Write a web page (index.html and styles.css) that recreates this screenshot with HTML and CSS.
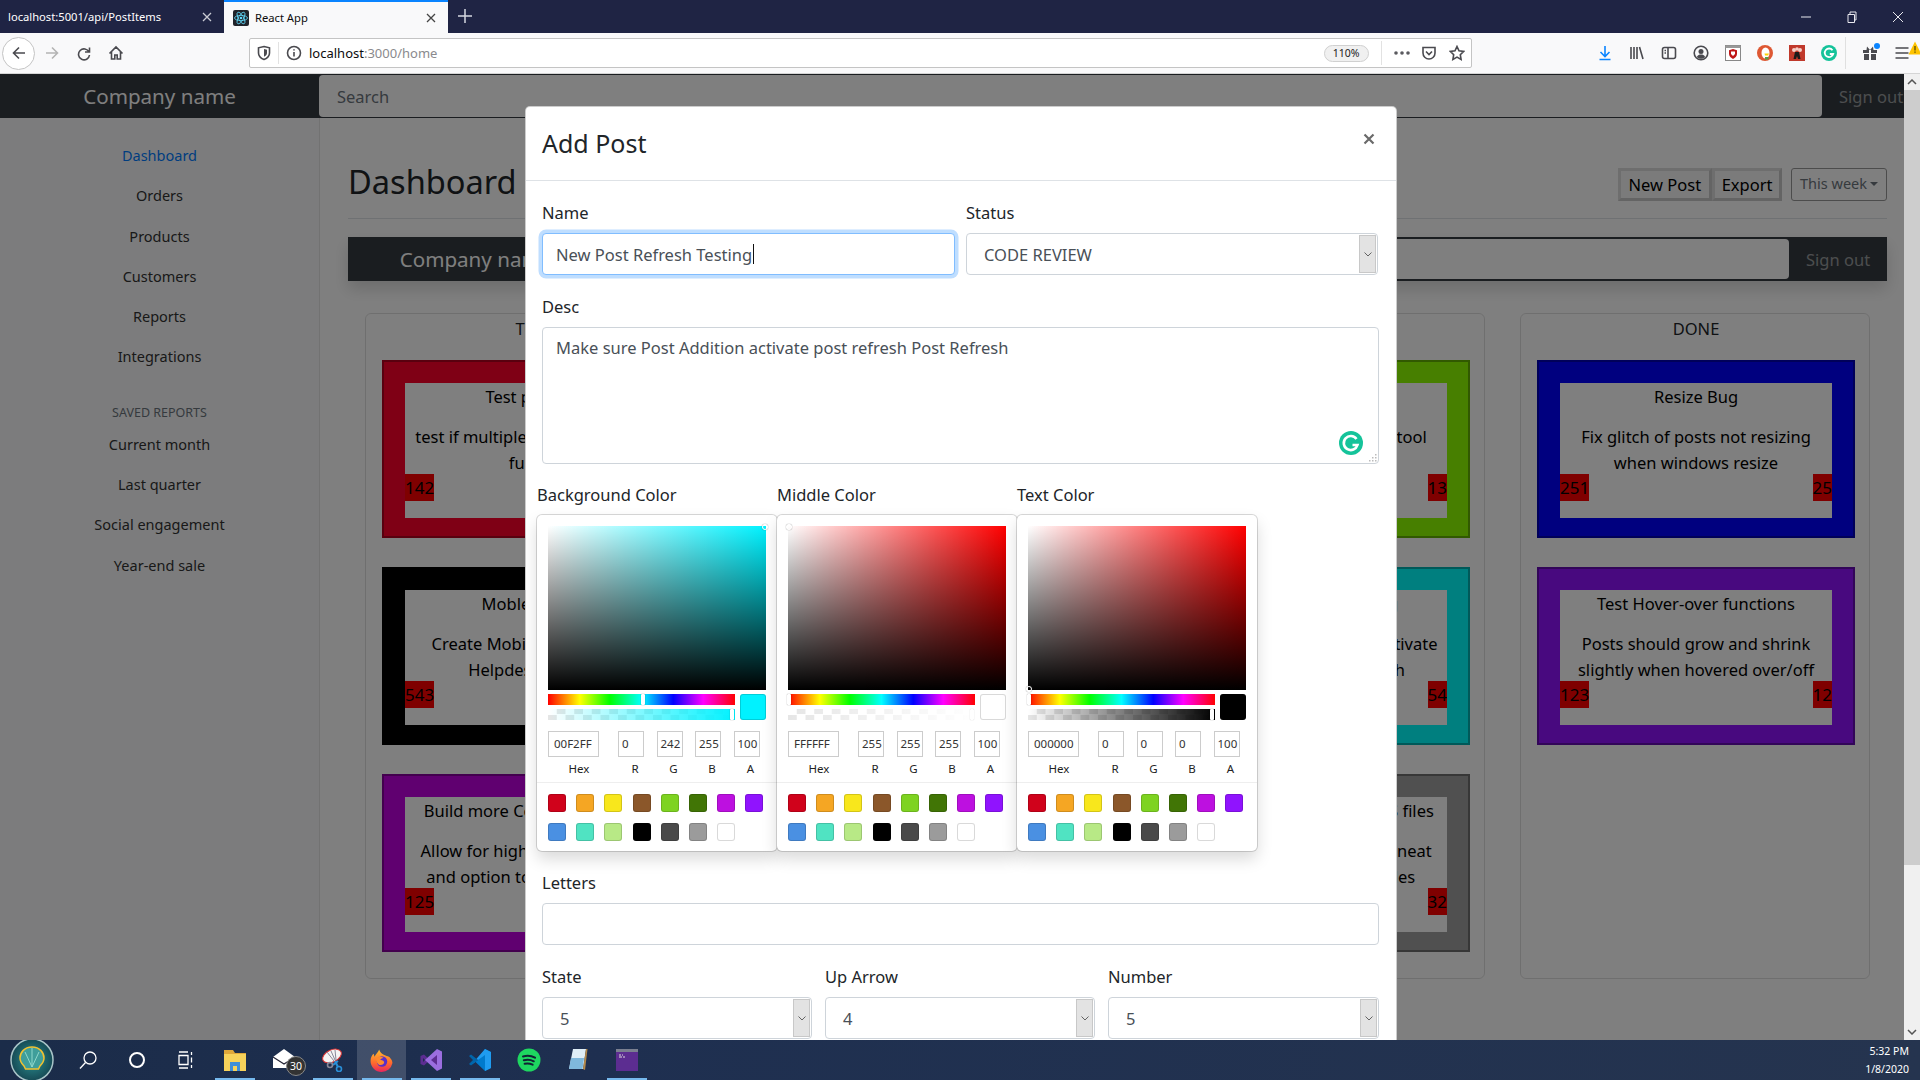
FILE: index.html
```html
<!DOCTYPE html>
<html lang="en">
<head>
<meta charset="utf-8">
<title>React App</title>
<link rel="stylesheet" href="styles.css">
</head>
<body>
<div class="window">

  <div class="tabbar">
    <div class="tab">
      <span class="tab-title">localhost:5001/api/PostItems</span>
      <svg class="tab-x" viewBox="0 0 10 10"><path d="M1 1l8 8M9 1l-8 8"/></svg>
    </div>
    <div class="tab tab-active">
      <svg class="favicon" viewBox="0 0 16 16"><rect width="16" height="16" rx="2" fill="#20232a"/><g fill="none" stroke="#61dafb" stroke-width=".8"><ellipse cx="8" cy="8" rx="6.5" ry="2.6"/><ellipse cx="8" cy="8" rx="6.5" ry="2.6" transform="rotate(60 8 8)"/><ellipse cx="8" cy="8" rx="6.5" ry="2.6" transform="rotate(120 8 8)"/></g><circle cx="8" cy="8" r="1.3" fill="#61dafb"/></svg>
      <span class="tab-title">React App</span>
      <svg class="tab-x" viewBox="0 0 10 10"><path d="M1 1l8 8M9 1l-8 8"/></svg>
    </div>
    <svg class="tab-new" viewBox="0 0 14 14"><path d="M7 0v14M0 7h14"/></svg>
    <div class="win-controls">
      <svg class="win-btn" viewBox="0 0 12 12"><path d="M1 6h10"/></svg>
      <svg class="win-btn" viewBox="0 0 12 12"><path d="M2 3.500h6.500v8H2zM4 3.500V1h6v8H8.500"/></svg>
      <svg class="win-btn" viewBox="0 0 12 12"><path d="M1 1l10 10M11 1L1 11"/></svg>
    </div>
  </div>

  <div class="toolbar">
    <div class="tool-slot back-slot"><span class="back-ring"><svg class="ico" viewBox="0 0 16 16"><path d="M14 8H2.500M8 2.500L2.500 8 8 13.500"/></svg></span></div>
    <div class="tool-slot"><svg class="ico ico-faint" viewBox="0 0 16 16"><path d="M2 8h11.500M8 2.500L13.500 8 8 13.500"/></svg></div>
    <div class="tool-slot"><svg class="ico" viewBox="0 0 16 16"><path d="M13.500 2.500v4.500H9M13 7a5.500 5.500 0 1 0 .5 3"/></svg></div>
    <div class="tool-slot"><svg class="ico" viewBox="0 0 16 16"><path d="M1.500 8.500L8 2l6.500 6.500M3.500 7v7h3.300v-4h2.400v4h3.300V7"/></svg></div>

    <div class="urlbar">
      <div class="url-shield"><svg class="ico" viewBox="0 0 16 16"><path d="M8 1.500l5.500 1.300V8c0 3-2.500 5.300-5.500 6.500C5 13.300 2.500 11 2.500 8V2.800z"/><path class="ico-fill" d="M8 4l3 .8V8c0 1.700-1.300 3-3 3.800z"/></svg></div>
      <svg class="ico url-info" viewBox="0 0 16 16"><circle cx="8" cy="8" r="6.500"/><path d="M8 7v4.500M8 4.200v1.300"/></svg>
      <span class="url-text"><span class="url-host">localhost</span>:3000/home</span>
      <span class="url-zoom">110%</span>
      <span class="url-sep"></span>
      <svg class="url-dots" viewBox="0 0 16 4"><circle cx="2" cy="2" r="1.800"/><circle cx="8" cy="2" r="1.800"/><circle cx="14" cy="2" r="1.800"/></svg>
      <svg class="ico url-pocket" viewBox="0 0 16 16"><path d="M2 2.500h12V8a6 6 0 0 1-12 0zM5 6.500l3 3 3-3"/></svg>
      <svg class="ico url-star" viewBox="0 0 16 16"><path d="M8 1.500l2 4.300 4.700.6-3.400 3.300.8 4.700L8 12.100l-4.100 2.300.8-4.700L1.300 6.400 6 5.800z"/></svg>
    </div>

    <div class="tool-right">
      <div class="tool-slot"><svg class="ico ico-blue" viewBox="0 0 16 16"><path d="M8 1v10M3.500 7L8 11.500 12.500 7M2.500 14.500h11"/></svg></div>
      <div class="tool-slot"><svg class="ico" viewBox="0 0 16 16"><path d="M2 2v12M5 2v12M8 2v12M10.500 2l3.500 12"/></svg></div>
      <div class="tool-slot"><svg class="ico" viewBox="0 0 16 16"><rect x="1.500" y="2.500" width="13" height="11" rx="2"/><path d="M7 2.500v11M3.500 5.500h1.500M3.500 8h1.500"/></svg></div>
      <div class="tool-slot"><svg class="ico" viewBox="0 0 16 16"><circle cx="8" cy="8" r="6.800"/><circle class="ico-fill" cx="8" cy="6.500" r="2.500"/><path class="ico-fill" d="M3.800 12c1-2 2.500-2.500 4.200-2.500s3.200.5 4.200 2.500c-1.200 1.200-2.600 1.800-4.200 1.800S5 13.200 3.800 12z"/></svg></div>
      <div class="tool-slot"><svg class="ico-flat" viewBox="0 0 16 16"><rect x=".5" y=".5" width="15" height="15" fill="#fff" stroke="#888"/><rect x=".5" y=".5" width="15" height="2.500" fill="#999"/><path fill="#c01818" d="M8 4l4 1.200V9c0 2.300-2 3.800-4 5-2-1.200-4-2.700-4-5V5.200z"/><path fill="#fff" d="M6 6.500h4V9L8 11 6 9z"/></svg></div>
      <div class="tool-slot"><svg class="ico-flat" viewBox="0 0 16 16"><circle cx="8" cy="8" r="8" fill="#de5833"/><ellipse cx="8.500" cy="8" rx="4" ry="5.500" fill="#fff"/><path fill="#5b9e4d" d="M8 12h3.500v2.500H8z"/><path fill="#fdd20a" d="M7.500 8.500H12l-1 2H8z"/></svg></div>
      <div class="tool-slot"><svg class="ico-flat" viewBox="0 0 16 16"><rect width="16" height="16" fill="#c0392b"/><circle cx="5" cy="5" r="2" fill="#f5d0c8"/><circle cx="11" cy="5" r="2" fill="#f5d0c8"/><circle cx="8" cy="4" r="1.800" fill="#f5d0c8"/><path fill="#1a1a1a" d="M6 7h4l1.500 7H9L8 11l-1 3H4.500z"/></svg></div>
      <div class="tool-slot"><svg class="ico-flat" viewBox="0 0 16 16"><circle cx="8" cy="8" r="8" fill="#15c39a"/><path fill="none" stroke="#fff" stroke-width="1.800" d="M11.500 5.200A4.300 4.300 0 1 0 12.200 9H8.800"/></svg></div>
      <span class="tool-sep"></span>
      <div class="tool-slot slot-rel"><svg class="ico-flat" viewBox="0 0 16 16"><path fill="#4a4a4f" d="M1 5h6v3H1zM9 5h6v3H9zM2 9h5v6H2zM9 9h5v6H9zM5 1.500l3 3.500H4.500zM11 1.500L8 5h3.500z"/></svg><span class="gift-dot"></span></div>
      <div class="tool-slot slot-rel"><svg class="ico" viewBox="0 0 16 16"><path d="M1.500 3h13M1.500 8h13M1.500 13h13"/></svg><svg class="warn" viewBox="0 0 14 14"><path fill="#ffc400" d="M7 .5l6.500 13H.5z"/><path stroke="#5a4a00" stroke-width="1.300" d="M7 5v4.500M7 10.500v1.300"/></svg></div>
    </div>
  </div>

  <div class="viewport">
    <div class="page">
      <header class="topnav">
        <div class="brand">Company name</div>
        <div class="search top-search">Search</div>
        <div class="signout">Sign out</div>
      </header>
      <div class="layout">
        <aside class="sidebar">
          <a class="side-link side-active">Dashboard</a>
          <a class="side-link">Orders</a>
          <a class="side-link">Products</a>
          <a class="side-link">Customers</a>
          <a class="side-link">Reports</a>
          <a class="side-link">Integrations</a>
          <div class="side-heading">SAVED REPORTS</div>
          <a class="side-link">Current month</a>
          <a class="side-link">Last quarter</a>
          <a class="side-link">Social engagement</a>
          <a class="side-link">Year-end sale</a>
        </aside>
        <main class="main">
          <div class="main-head">
            <h1 class="main-title">Dashboard</h1>
            <div class="head-actions">
              <div class="btn-group"><span class="btn">New Post</span><span class="btn">Export</span></div>
              <span class="btn-week">This week<i class="caret"></i></span>
            </div>
          </div>
          <div class="subnav">
            <div class="brand sub-brand">Company name</div>
            <div class="search sub-search">Search</div>
            <div class="signout sub-signout">Sign out</div>
          </div>
          <div class="board">
            <section class="column">
              <h2 class="col-title">TO DO</h2>
              <article class="card card-red"><div class="frame"><div class="card-title">Test post adds</div><p class="card-text">test if multiple posts can all exist<br>function</p><div class="card-foot"><span class="badge">142</span><span class="badge">14</span></div></div></article>
              <article class="card card-black"><div class="frame"><div class="card-title">Moble Versions</div><p class="card-text">Create Mobile version of the<br>Helpdesk app here</p><div class="card-foot"><span class="badge">543</span><span class="badge">54</span></div></div></article>
              <article class="card card-purple"><div class="frame"><div class="card-title">Build more Complex Card Sets</div><p class="card-text">Allow for high customization of<br>and option to add images too</p><div class="card-foot"><span class="badge">125</span><span class="badge">12</span></div></div></article>
            </section>
            <section class="column">
              <h2 class="col-title">IN PROGRESS</h2>
            </section>
            <section class="column">
              <h2 class="col-title">CODE REVIEW</h2>
              <article class="card card-green"><div class="frame"><div class="card-title">Color Picker</div><p class="card-text">Add color picker as a new tool<br>&nbsp;</p><div class="card-foot"><span class="badge">135</span><span class="badge">13</span></div></div></article>
              <article class="card card-teal"><div class="frame"><div class="card-title">Post Refreshes Testing</div><p class="card-text">Make sure Post Addition activate<br>the post list on a refresh</p><div class="card-foot"><span class="badge">541</span><span class="badge">54</span></div></div></article>
              <article class="card card-gray"><div class="frame"><div class="card-title">Build custom SASS and CSS files</div><p class="card-text">Organize all the styles in a neat<br>and orderly set of modules</p><div class="card-foot"><span class="badge">321</span><span class="badge">32</span></div></div></article>
            </section>
            <section class="column">
              <h2 class="col-title">DONE</h2>
              <article class="card card-blue"><div class="frame"><div class="card-title">Resize Bug</div><p class="card-text">Fix glitch of posts not resizing<br>when windows resize</p><div class="card-foot"><span class="badge">251</span><span class="badge">25</span></div></div></article>
              <article class="card card-violet"><div class="frame"><div class="card-title">Test Hover-over functions</div><p class="card-text">Posts should grow and shrink<br>slightly when hovered over/off</p><div class="card-foot"><span class="badge">123</span><span class="badge">12</span></div></div></article>
            </section>
          </div>
        </main>
      </div>

      <div class="backdrop"></div>
      <div class="modal">
        <div class="modal-head">
          <div class="modal-title">Add Post</div>
          <svg class="modal-close" viewBox="0 0 12 12"><path d="M1.500 1.500l9 9M10.500 1.500l-9 9"/></svg>
        </div>
        <div class="modal-body">
          <div class="row-2">
            <div class="field">
              <label class="lbl">Name</label>
              <div class="control control-focus">New Post Refresh Testing<span class="text-caret"></span></div>
            </div>
            <div class="field">
              <label class="lbl">Status</label>
              <div class="control control-select"><span class="select-val">CODE REVIEW</span><span class="select-arrow"><svg viewBox="0 0 8 5"><path d="M.5.500L4 4 7.500.500"/></svg></span></div>
            </div>
          </div>
          <div class="field">
            <label class="lbl">Desc</label>
            <div class="control control-area">Make sure Post Addition activate post refresh Post Refresh
              <svg class="grammarly" viewBox="0 0 24 24"><circle cx="12" cy="12" r="12" fill="#15c39a"/><path fill="none" stroke="#fff" stroke-width="2.600" d="M17.500 8A7 7 0 1 0 18.500 14H13.500"/></svg>
              <svg class="resize-grip" viewBox="0 0 9 9"><path fill="#bbb" d="M7 1h1.500v1.500H7zM4 4h1.500v1.500H4zM7 4h1.500v1.500H7zM1 7h1.500v1.500H1zM4 7h1.500v1.500H4zM7 7h1.500v1.500H7z"/></svg>
            </div>
          </div>

          <div class="pickers">
            <div class="picker-col">
              <label class="lbl lbl-picker">Background Color</label>
              <div class="picker">
                <div class="sat sat-cyan"><i class="sat-dot dot-tr"></i></div>
                <div class="pick-ctrl">
                  <div class="pick-sliders">
                    <div class="hue"><i class="handle handle-cyan"></i></div>
                    <div class="alpha"><div class="alpha-fill fill-cyan"></div><i class="handle handle-end"></i></div>
                  </div>
                  <div class="pick-swatch swatch-cyan"></div>
                </div>
                <div class="pick-inputs">
                  <div class="pf pf-hex"><span class="pi">00F2FF</span><span class="pl">Hex</span></div>
                  <div class="pf"><span class="pi">0</span><span class="pl">R</span></div>
                  <div class="pf"><span class="pi">242</span><span class="pl">G</span></div>
                  <div class="pf"><span class="pi">255</span><span class="pl">B</span></div>
                  <div class="pf"><span class="pi">100</span><span class="pl">A</span></div>
                </div>
                <div class="presets">
                  <i class="c c1"></i><i class="c c2"></i><i class="c c3"></i><i class="c c4"></i><i class="c c5"></i><i class="c c6"></i><i class="c c7"></i><i class="c c8"></i><i class="c c9"></i><i class="c c10"></i><i class="c c11"></i><i class="c c12"></i><i class="c c13"></i><i class="c c14"></i><i class="c c15"></i>
                </div>
              </div>
            </div>
            <div class="picker-col">
              <label class="lbl lbl-picker">Middle Color</label>
              <div class="picker">
                <div class="sat sat-red"><i class="sat-dot dot-tl"></i></div>
                <div class="pick-ctrl">
                  <div class="pick-sliders">
                    <div class="hue"><i class="handle handle-start"></i></div>
                    <div class="alpha"><div class="alpha-fill fill-white"></div><i class="handle handle-end handle-ghost"></i></div>
                  </div>
                  <div class="pick-swatch swatch-white"></div>
                </div>
                <div class="pick-inputs">
                  <div class="pf pf-hex"><span class="pi">FFFFFF</span><span class="pl">Hex</span></div>
                  <div class="pf"><span class="pi">255</span><span class="pl">R</span></div>
                  <div class="pf"><span class="pi">255</span><span class="pl">G</span></div>
                  <div class="pf"><span class="pi">255</span><span class="pl">B</span></div>
                  <div class="pf"><span class="pi">100</span><span class="pl">A</span></div>
                </div>
                <div class="presets">
                  <i class="c c1"></i><i class="c c2"></i><i class="c c3"></i><i class="c c4"></i><i class="c c5"></i><i class="c c6"></i><i class="c c7"></i><i class="c c8"></i><i class="c c9"></i><i class="c c10"></i><i class="c c11"></i><i class="c c12"></i><i class="c c13"></i><i class="c c14"></i><i class="c c15"></i>
                </div>
              </div>
            </div>
            <div class="picker-col">
              <label class="lbl lbl-picker">Text Color</label>
              <div class="picker">
                <div class="sat sat-red"><i class="sat-dot dot-bl"></i></div>
                <div class="pick-ctrl">
                  <div class="pick-sliders">
                    <div class="hue"><i class="handle handle-start"></i></div>
                    <div class="alpha"><div class="alpha-fill fill-black"></div><i class="handle handle-end"></i></div>
                  </div>
                  <div class="pick-swatch swatch-black"></div>
                </div>
                <div class="pick-inputs">
                  <div class="pf pf-hex"><span class="pi">000000</span><span class="pl">Hex</span></div>
                  <div class="pf"><span class="pi">0</span><span class="pl">R</span></div>
                  <div class="pf"><span class="pi">0</span><span class="pl">G</span></div>
                  <div class="pf"><span class="pi">0</span><span class="pl">B</span></div>
                  <div class="pf"><span class="pi">100</span><span class="pl">A</span></div>
                </div>
                <div class="presets">
                  <i class="c c1"></i><i class="c c2"></i><i class="c c3"></i><i class="c c4"></i><i class="c c5"></i><i class="c c6"></i><i class="c c7"></i><i class="c c8"></i><i class="c c9"></i><i class="c c10"></i><i class="c c11"></i><i class="c c12"></i><i class="c c13"></i><i class="c c14"></i><i class="c c15"></i>
                </div>
              </div>
            </div>
          </div>

          <div class="field">
            <label class="lbl">Letters</label>
            <div class="control"></div>
          </div>
          <div class="row-3">
            <div class="field">
              <label class="lbl">State</label>
              <div class="control control-select"><span class="select-val">5</span><span class="select-arrow"><svg viewBox="0 0 8 5"><path d="M.5.500L4 4 7.500.500"/></svg></span></div>
            </div>
            <div class="field">
              <label class="lbl">Up Arrow</label>
              <div class="control control-select"><span class="select-val">4</span><span class="select-arrow"><svg viewBox="0 0 8 5"><path d="M.5.500L4 4 7.500.500"/></svg></span></div>
            </div>
            <div class="field">
              <label class="lbl">Number</label>
              <div class="control control-select"><span class="select-val">5</span><span class="select-arrow"><svg viewBox="0 0 8 5"><path d="M.5.500L4 4 7.500.500"/></svg></span></div>
            </div>
          </div>
        </div>
      </div>
    </div>

    <div class="scrollbar">
      <svg class="sb-arrow" viewBox="0 0 10 6"><path d="M1 5l4-4 4 4"/></svg>
      <div class="sb-thumb"></div>
      <div class="sb-track"></div>
      <svg class="sb-arrow" viewBox="0 0 10 6"><path d="M1 1l4 4 4-4"/></svg>
    </div>
  </div>

  <footer class="taskbar">
    <div class="task-start"><svg viewBox="0 0 44 44"><defs><radialGradient id="orb"><stop offset="0" stop-color="#2b8f8f"/><stop offset="1" stop-color="#164a55"/></radialGradient></defs><circle cx="22" cy="22" r="21" fill="url(#orb)" stroke="#a8c4c8" stroke-width="1.500"/><path fill="#3f9e9a" stroke="#f2c230" stroke-width="1.500" d="M22 9c-8 0-12 6-12 11 0 3 2 6 4 8l1.500 3h13l1.500-3c2-2 4-5 4-8 0-5-4-11-12-11z"/><path fill="none" stroke="#8fd8cc" d="M22 29V10M22 29l-7-15M22 29l7-15"/></svg></div>
    <div class="task-slot"><svg class="task-ico ico-white" viewBox="0 0 20 20"><circle cx="12" cy="8" r="6"/><path d="M7.500 12.500L2 18.500"/></svg></div>
    <div class="task-slot"><svg class="task-ico ico-white ico-thick" viewBox="0 0 20 20"><circle cx="10" cy="10" r="7"/></svg></div>
    <div class="task-slot"><svg class="task-ico ico-white" viewBox="0 0 20 20"><path d="M3 2h9M3 18h9M3 5.500h9v9H3zM15.500 2v3M15.500 7.500v5M15.500 15v3"/></svg></div>
    <div class="task-slot task-run"><svg class="task-ico" viewBox="0 0 24 24"><path fill="#e0a83a" d="M1 2h9l2 3h11v18H1z"/><path fill="#f7d25a" d="M1 6h22v17H1z"/><path fill="#3f8fd8" d="M7 14h10v9h-3v-5h-4v5H7z"/></svg></div>
    <div class="task-slot slot-rel"><svg class="task-ico" viewBox="0 0 24 24"><path fill="#fff" d="M1 9l11-8 11 8v11H1z"/><path fill="none" stroke="#223" stroke-width="1.200" d="M1 9l11 7 11-7"/></svg><span class="mail-badge">30</span></div>
    <div class="task-slot task-run"><svg class="task-ico" viewBox="0 0 24 24"><ellipse cx="11" cy="8" rx="10" ry="6" fill="#f4f4f4" stroke="#d33" transform="rotate(-25 11 8)"/><path stroke="#889" d="M6 4l7 9M10 3l4 9M14 2l1 10"/><path fill="none" stroke="#2a8fd8" stroke-width="2" d="M14 13l3 6M12 17l5-4"/><circle cx="18" cy="21" r="2.500" fill="none" stroke="#2a8fd8" stroke-width="1.600"/><circle cx="9" cy="17" r="2.500" fill="none" stroke="#889" stroke-width="1.600"/></svg></div>
    <div class="task-slot task-run task-on"><svg class="task-ico task-ico-lg" viewBox="0 0 24 24"><defs><linearGradient id="ff" x1="0" y1="0" x2="0" y2="1"><stop offset="0" stop-color="#ffbd2e"/><stop offset=".6" stop-color="#ff6a2d"/><stop offset="1" stop-color="#e8255e"/></linearGradient></defs><path fill="url(#ff)" d="M12 23a10.500 10.500 0 0 1-10.500-10.500C1.500 9 3 6.500 4.500 5.500l.8 3c1-2.500 3.500-4 4.500-7 0 0 .7 3 3.500 4.500 4 2 6 2 7 3.500 1.500 1.500 2.200 3.500 2.200 5A10.500 10.500 0 0 1 12 23z"/><circle cx="12.500" cy="13" r="5" fill="#5b2ec9"/><path fill="#ff8a2d" d="M7 10c2-2 5-2 7-.5-2 0-3 1-3 2 2 0 4 1 3.500 3-1 2-4 2.500-5.500 1C7.500 14 6.500 12 7 10z"/></svg></div>
    <div class="task-slot task-run"><svg class="task-ico" viewBox="0 0 24 24"><path fill="#5c2d91" d="M1.500 8L5 6.500l6 5.500L5 17.500 1.500 16zM4 10v4l2-2z"/><path fill="#9b6ee0" d="M18 1l5 2.500v17L18 23 6 12z"/><path fill="#5c2d91" d="M18 7l-6 5 6 5z"/></svg></div>
    <div class="task-slot task-run"><svg class="task-ico" viewBox="0 0 24 24"><path fill="#0065a9" d="M1 8l2-1.500 7 5.500-7 5.500L1 16l4-4z"/><path fill="#007acc" d="M17 1l6 3v16l-6 3L7 13.500 3 17l7-5 7-11z"/><path fill="#1f9cf0" d="M17 1l6 3v16l-6 3V7l-7 5-1.500-1.300z"/></svg></div>
    <div class="task-slot"><svg class="task-ico" viewBox="0 0 24 24"><circle cx="12" cy="12" r="11.500" fill="#1ed760"/><path fill="none" stroke="#123" stroke-width="2" stroke-linecap="round" d="M6 8.500c4-1.200 8.500-.8 12 1.200M6.800 12.300c3.500-1 7-.6 10 1M7.600 15.800c2.800-.7 5.500-.4 8 .9"/></svg></div>
    <div class="task-slot"><svg class="task-ico" viewBox="0 0 24 24"><path fill="#dfeef7" d="M7 1h13l-3 20H3z"/><path fill="#7fb8dc" d="M5 10h13l-1.500 11H3z"/><path fill="#b58a4a" d="M20 1h1.500L19 22l-2-1z"/></svg></div>
    <div class="task-slot task-run"><svg class="task-ico" viewBox="0 0 24 24"><rect x="1" y="1" width="22" height="22" fill="#5c2d91"/><rect x="1" y="1" width="22" height="3" fill="#7a7f90"/><path stroke="#ddd" stroke-width="1" d="M4 7h2M7 7h1M4 9h3M8 9h2"/></svg></div>
    <div class="clock"><span>5:32 PM</span><span>1/8/2020</span></div>
  </footer>
</div>
</body>
</html>
```

FILE: styles.css
```css
* { box-sizing: border-box; }
html, body { margin: 0; height: 100%; overflow: hidden; }
body { font-family: "Noto Sans", "Open Sans", sans-serif; color: #212529; }
.window { width: 1920px; height: 1080px; display: flex; flex-direction: column; background: #fff; }

/* browser tabs */
.tabbar { height: 33px; flex: none; display: flex; align-items: stretch; background: #1f2444; color: #fff; }
.tab { width: 224px; display: flex; align-items: center; padding: 0 8px; font-size: 11.2px; }
.tab-active { background: #f9f9fa; color: #0c0c0d; border-top: 2px solid #0a84ff; padding-left: 9px; }
.tab-title { flex: 1; white-space: nowrap; }
.tab-x { width: 10px; height: 10px; margin-right: 4px; fill: none; stroke: #c9cad3; stroke-width: 1.3; }
.tab-active .tab-x { stroke: #444; }
.favicon { width: 16px; height: 16px; margin-right: 6px; }
.tab-new { width: 14px; height: 14px; align-self: center; margin: 0 0 2px 10px; fill: none; stroke: #d5d6df; stroke-width: 1.5; }
.win-controls { margin-left: auto; display: flex; align-items: center; gap: 34px; padding-right: 16px; }
.win-btn { width: 12px; height: 12px; fill: none; stroke: #e8e8ee; stroke-width: 1; }

/* browser toolbar */
.toolbar { height: 41px; flex: none; display: flex; align-items: center; padding-left: 2px; background: #f9f9fa; border-bottom: 1px solid #d5d5d5; }
.tool-slot { width: 32px; height: 32px; flex: none; display: flex; align-items: center; justify-content: center; }
.back-slot { width: 33px; height: 33px; margin-right: 1px; }
.back-ring { width: 33px; height: 33px; border: 1px solid #c4c4c4; border-radius: 50%; display: flex; align-items: center; justify-content: center; background: #fff; }
.ico { width: 16px; height: 16px; fill: none; stroke: #4a4a4f; stroke-width: 1.6; flex: none; }
.ico-fill { fill: #4a4a4f; stroke: none; }
.ico-faint { stroke: #b4b4b4; }
.ico-blue { stroke: #0a84ff; }
.ico-flat { width: 16px; height: 16px; flex: none; }
.urlbar { width: 1223px; height: 30px; margin-left: 117px; flex: none; display: flex; align-items: center; background: #fff; border: 1px solid #c4c4c4; border-radius: 2px; font-size: 13px; }
.url-shield { width: 29px; height: 22px; display: flex; align-items: center; justify-content: center; border-right: 1px solid #e2e2e2; }
.url-info { margin-left: 7px; }
.url-text { margin-left: 7px; color: #8a8a8d; flex: 1; }
.url-host { color: #0c0c0d; }
.url-zoom { width: 45px; height: 17px; line-height: 15px; border: 1px solid #d0d0d0; border-radius: 9px; background: #f0f0f0; text-align: center; font-size: 10.500px; color: #222; }
.url-sep { width: 1px; height: 24px; background: #e2e2e2; margin: 0 12px; }
.url-dots { width: 16px; height: 4px; fill: #5a5a5f; }
.url-pocket { margin-left: 11.400px; }
.url-star { margin-left: 12px; margin-right: 6px; }
.tool-right { margin-left: 117px; display: flex; align-items: center; }
.tool-sep { width: 1px; height: 32px; background: #e0e0e0; margin: 0 8px 0 0; }
.slot-rel { position: relative; }
.gift-dot { position: absolute; width: 6px; height: 6px; border-radius: 50%; background: #0a84ff; top: 6px; right: 6px; }
.warn { position: absolute; width: 14px; height: 14px; top: 4px; right: -4px; }

/* page */
.viewport { flex: 1; min-height: 0; display: flex; position: relative; }
.page { position: relative; width: 1904px; flex: none; overflow: hidden; background: #fff; }
.topnav { height: 44px; width: 1904px; display: flex; align-items: center; background: #343a40; }
.brand { width: 319px; flex: none; text-align: center; font-size: 20.6px; color: #fff; }
.search { background: #fff; color: #6c757d; font-size: 16.500px; border-radius: 4px; padding-left: 18px; display: flex; align-items: center; }
.top-search { width: 1503px; height: 42px; flex: none; }
.signout { padding-left: 17px; font-size: 16.500px; color: rgba(255,255,255,.5); white-space: nowrap; }
.layout { display: flex; height: 922px; }
.sidebar { width: 320px; flex: none; padding-top: 17px; background: #f8f9fa; border-right: 1px solid #e4e4e4; display: flex; flex-direction: column; align-items: center; }
.side-link { height: 40.300px; line-height: 40.300px; font-size: 14.500px; color: #333; }
.side-active { color: #007bff; }
.side-heading { margin-top: 25px; height: 22px; line-height: 22px; font-size: 12.500px; color: #6c757d; }
.main { flex: 1; min-width: 0; padding: 0 17px 0 28px; }
.main-head { height: 101px; padding-top: 50px; display: flex; justify-content: space-between; align-items: flex-start; border-bottom: 1px solid #dee2e6; }
.main-title { margin: -8px 0 0; font-size: 32.600px; line-height: 44px; font-weight: 400; }
.head-actions { display: flex; gap: 9px; }
.btn-group { display: flex; }
.btn { height: 33px; line-height: 27px; padding: 0 8px; font-size: 16.500px; background: #f6f6f6; border: 3px solid #dcdcdc; border-bottom-color: #c8c8c8; border-right-color: #c8c8c8; color: #000; }
.btn:last-child { padding: 0 6.500px; }
.btn-week { width: 96px; height: 33px; line-height: 29px; text-align: center; font-size: 14.500px; border: 1px solid #999; border-radius: 3px; color: #6c757d; }
.caret { display: inline-block; margin-left: 3px; vertical-align: 3px; border-top: 4.500px solid currentColor; border-left: 4.500px solid transparent; border-right: 4.500px solid transparent; }
.subnav { margin-top: 18px; height: 44px; display: flex; align-items: center; background: #343a40; box-shadow: 0 8px 16px rgba(0,0,0,.15); }
.sub-brand { width: 256px; }
.sub-search { flex: 1; height: 40px; border-radius: 0 4px 4px 0; }
.sub-signout { width: 98px; }
.board { margin: 32px 0 0 17px; display: grid; grid-template-columns: repeat(4, 350px); column-gap: 35px; }
.column { height: 666px; padding: 0 14px 0 16px; border: 1px solid rgba(0,0,0,.125); border-radius: 6px; }
.col-title { margin: 0; height: 46px; line-height: 30px; text-align: center; font-size: 16.500px; font-weight: 400; color: #212529; }
.card { height: 178px; margin-bottom: 29px; padding: 21px 21px 18px; border: 2px solid rgba(0,0,0,.3); }
.card-red { background: #ff002b; }
.card-black { background: #000; }
.card-purple { background: #c000e0; }
.card-green { background: #8eff00; }
.card-teal { background: #00ffff; }
.card-gray { background: #a0a0a0; }
.card-blue { background: #0000ff; }
.card-violet { background: #9013fe; }
.frame { height: 135px; padding-top: 1px; background: #fff; text-align: center; color: #000; font-size: 16.500px; line-height: 26px; white-space: nowrap; overflow: hidden; }
.card-title { height: 26px; margin-bottom: 14px; }
.card-text { margin: 0; height: 52px; }
.card-foot { display: flex; justify-content: space-between; margin-top: -2px; }
.badge { height: 27px; line-height: 27px; background: #ff0000; font-size: 17px; }

.backdrop { position: absolute; inset: 0; background: rgba(0,0,0,.5); }

/* modal */
.modal { position: absolute; left: 525px; top: 32px; width: 872px; height: 1000px; background: #fff; border: 1px solid rgba(0,0,0,.2); border-radius: 5px; }
.modal-head { height: 74px; padding: 16px 16px 0; display: flex; justify-content: space-between; border-bottom: 1px solid #dee2e6; }
.modal-title { font-size: 25px; line-height: 40px; color: #212529; }
.modal-close { width: 12px; height: 12px; margin: 10px 5px 0 0; fill: none; stroke: #6a6a6a; stroke-width: 2.200; }
.modal-body { padding: 18.500px 17px 0 16px; }
.row-2 { display: grid; grid-template-columns: 413px 412px; column-gap: 11px; }
.row-3 { display: grid; grid-template-columns: 270px 270px 271px; column-gap: 13px; }
.field { margin-bottom: 18.500px; }
.lbl { display: block; height: 26px; line-height: 26px; margin-bottom: 7.500px; font-size: 16.500px; color: #212529; }
.control { height: 42px; display: flex; align-items: center; padding: 0 13px; background: #fff; border: 1px solid #ced4da; border-radius: 4px; font-size: 16.500px; color: #495057; position: relative; }
.control-focus { border-color: #80bdff; box-shadow: 0 0 0 3.500px rgba(0,123,255,.25); }
.text-caret { display: inline-block; width: 1px; height: 20px; background: #111; margin-left: 1px; }
.control-select { padding: 0 1px 0 17px; }
.select-val { flex: 1; }
.select-arrow { width: 17px; height: 38px; background: #e3e3e3; border: 1px solid #c8c8c8; display: flex; align-items: center; justify-content: center; }
.select-arrow svg { width: 8px; height: 5px; fill: none; stroke: #555; stroke-width: .9; }
.control-area { height: 136.500px; align-items: flex-start; padding-top: 8px; }
.grammarly { position: absolute; right: 15px; bottom: 7.500px; width: 24px; height: 24px; }
.resize-grip { position: absolute; right: 1px; bottom: 1px; width: 9px; height: 9px; }

/* colour pickers */
.pickers { display: flex; margin: 2px 0 18.500px -5px; }
.picker-col { width: 240px; }
.lbl-picker { margin-bottom: 7px; }
.picker { width: 240px; height: 336px; padding: 11px 11px 0; background: #fff; border-radius: 5px; box-shadow: 0 0 0 1px rgba(0,0,0,.15), 0 8px 16px rgba(0,0,0,.15); position: relative; }
.sat { width: 218px; height: 164px; position: relative; background: linear-gradient(to top, #000, transparent), linear-gradient(to right, #fff, transparent); }
.sat-cyan { background-color: #00f2ff; }
.sat-red { background-color: #f00; }
.sat-dot { position: absolute; width: 6px; height: 6px; border: 1px solid #fff; border-radius: 50%; box-shadow: 0 0 1px #555; }
.dot-tr { right: -2px; top: -2px; }
.dot-tl { left: -2px; top: -2px; }
.dot-bl { left: -2px; bottom: -2px; }
.pick-ctrl { display: flex; gap: 5px; margin-top: 4px; }
.pick-sliders { width: 187px; }
.hue { height: 11px; position: relative; background: linear-gradient(to right, #f00 0, #ff0 17%, #0f0 33%, #0ff 50%, #00f 67%, #f0f 83%, #f00 100%); }
.alpha { height: 11px; margin-top: 4px; position: relative; background: repeating-conic-gradient(#e6e6e6 0 25%, #fff 0 50%) 0 0 / 17.500px 11px; }
.alpha-fill { height: 100%; }
.fill-cyan { background: linear-gradient(to right, rgba(0,242,255,0), #00f2ff); }
.fill-white { background: linear-gradient(to right, rgba(255,255,255,0), #fff); }
.fill-black { background: linear-gradient(to right, rgba(0,0,0,0), #000); }
.handle { position: absolute; top: 0; width: 4px; height: 11px; background: #fff; border-radius: 1px; box-shadow: 0 0 1px rgba(0,0,0,.6); }
.handle-cyan { left: 93px; }
.handle-start { left: -1px; }
.handle-end { right: 1px; }
.handle-ghost { box-shadow: 0 0 1px rgba(0,0,0,.3); }
.pick-swatch { width: 26px; height: 26px; border-radius: 3px; box-shadow: inset 0 0 0 1px rgba(0,0,0,.15); }
.swatch-cyan { background: #00f2ff; }
.swatch-white { background: #fff; }
.swatch-black { background: #000; }
.pick-inputs { display: flex; margin-top: 11px; }
.pf { width: 38.500px; flex: none; display: flex; flex-direction: column; }
.pf-hex { width: 70px; }
.pi { width: 26px; height: 26px; line-height: 24px; padding-left: 3px; border: 1px solid #ccc; font-size: 11.500px; color: #333; }
.pf-hex .pi { width: 51px; padding-left: 5px; }
.pl { width: 34px; margin-top: 4px; height: 16px; line-height: 16px; text-align: center; font-size: 11.500px; color: #222; }
.pf-hex .pl { width: 62px; }
.presets { display: flex; flex-wrap: wrap; gap: 11px 10.200px; margin: 5px -11px 0; padding: 11px 11px 0; border-top: 1px solid #eee; }
.c { width: 18px; height: 18px; border-radius: 3px; box-shadow: inset 0 0 0 1px rgba(0,0,0,.15); }
.c1 { background: #d0021b; } .c2 { background: #f5a623; } .c3 { background: #f8e71c; } .c4 { background: #8b572a; } .c5 { background: #7ed321; }
.c6 { background: #417505; } .c7 { background: #bd10e0; } .c8 { background: #9013fe; } .c9 { background: #4a90e2; } .c10 { background: #50e3c2; }
.c11 { background: #b8e986; } .c12 { background: #000; } .c13 { background: #4a4a4a; } .c14 { background: #9b9b9b; } .c15 { background: #fff; }

/* scrollbar */
.scrollbar { width: 16px; flex: 1; display: flex; flex-direction: column; align-items: center; background: #f0f0f0; }
.sb-arrow { width: 10px; height: 6px; margin: 5px 0; flex: none; fill: none; stroke: #555; stroke-width: 1.500; }
.sb-thumb { width: 16px; height: 775px; flex: none; background: #cdcdcd; }
.sb-track { flex: 1; }

/* taskbar */
.taskbar { height: 40px; flex: none; display: flex; align-items: center; padding-left: 7px; background: linear-gradient(to right, #1b2c49, #1e2f50 30%, #25344f 100%); color: #fff; }
.task-start { width: 56px; height: 40px; flex: none; display: flex; align-items: center; padding-left: 3px; }
.task-start svg { width: 44px; height: 44px; }
.task-slot { width: 49px; height: 40px; flex: none; display: flex; align-items: center; justify-content: center; }
.task-run { background: linear-gradient(#76b9ed, #76b9ed) center bottom / 40px 2px no-repeat; }
.task-on { background-color: rgba(255,255,255,.16); }
.task-ico { width: 24px; height: 24px; flex: none; }
.task-ico-lg { width: 25px; height: 25px; }
.ico-white { fill: none; stroke: #fff; stroke-width: 1.300; width: 20px; height: 20px; }
.ico-thick { stroke-width: 2; }
.mail-badge { position: absolute; left: 27px; top: 16px; width: 20px; height: 20px; line-height: 18px; border-radius: 50%; background: #333; border: 1px solid #888; font-size: 10.500px; text-align: center; color: #fff; }
.clock { margin-left: auto; padding-right: 11px; display: flex; flex-direction: column; align-items: flex-end; gap: 4px; font-size: 10.500px; line-height: 14px; }
```
